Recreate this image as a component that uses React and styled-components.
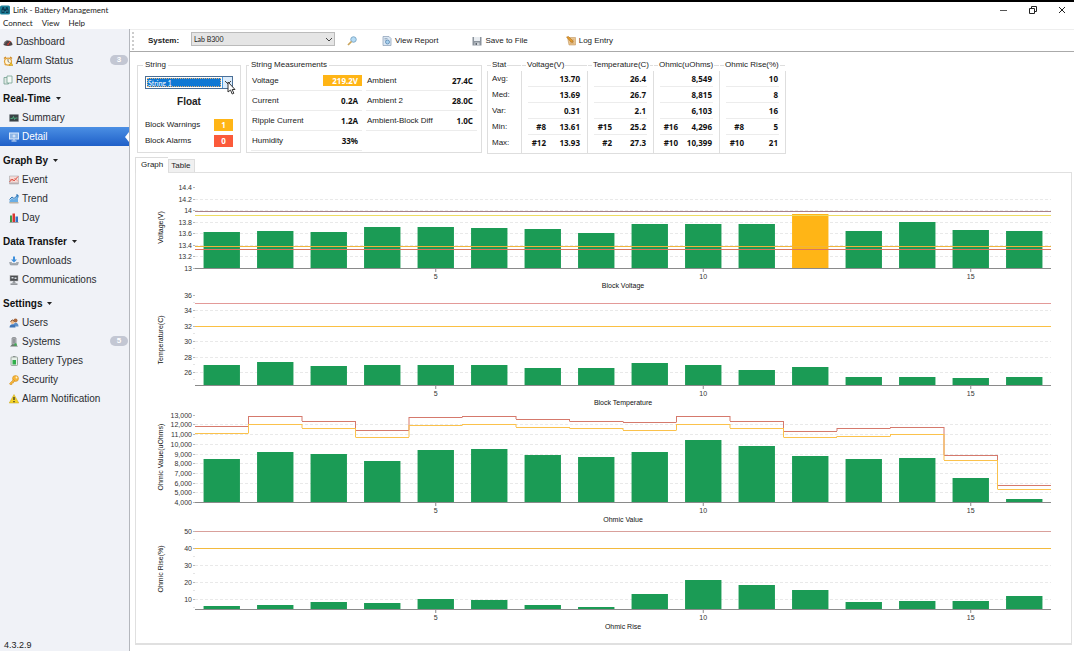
import { useState } from 'react'
import styled, { createGlobalStyle, css } from 'styled-components'

const GREEN = '#1b9b55'
const AMBER = '#ffb516'
const RED = '#fb5a3a'

const menus = ['Connect', 'View', 'Help']

const topLinks = [
    { name: 'Dashboard', icon: 'gauge' },
    { name: 'Alarm Status', icon: 'clock', count: 3 },
    { name: 'Reports', icon: 'reports' }
]

const sections = [
    { title: 'Real-Time', links: [
        { name: 'Summary', icon: 'monitor' },
        { name: 'Detail', icon: 'screen', active: true }
    ] },
    { title: 'Graph By', links: [
        { name: 'Event', icon: 'event' },
        { name: 'Trend', icon: 'trend' },
        { name: 'Day', icon: 'day' }
    ] },
    { title: 'Data Transfer', links: [
        { name: 'Downloads', icon: 'download' },
        { name: 'Communications', icon: 'comm' }
    ] },
    { title: 'Settings', links: [
        { name: 'Users', icon: 'users' },
        { name: 'Systems', icon: 'systems', count: 5 },
        { name: 'Battery Types', icon: 'battery' },
        { name: 'Security', icon: 'key' },
        { name: 'Alarm Notification', icon: 'warning' }
    ] }
]

const measurements = [
    [
        { label: 'Voltage', value: '219.2V', warn: true },
        { label: 'Current', value: '0.2A' },
        { label: 'Ripple Current', value: '1.2A' },
        { label: 'Humidity', value: '33%' }
    ],
    [
        { label: 'Ambient', value: '27.4C' },
        { label: 'Ambient 2', value: '28.0C' },
        { label: 'Ambient-Block Diff', value: '1.0C' }
    ]
]

const statHeads = ['Voltage(V)', 'Temperature(C)', 'Ohmic(uOhms)', 'Ohmic Rise(%)']

const stats = [
    { label: 'Avg:', cells: [['', '13.70'], ['', '26.4'], ['', '8,549'], ['', '10']] },
    { label: 'Med:', cells: [['', '13.69'], ['', '26.7'], ['', '8,815'], ['', '8']] },
    { label: 'Var:', cells: [['', '0.31'], ['', '2.1'], ['', '6,103'], ['', '16']] },
    { label: 'Min:', cells: [['#8', '13.61'], ['#15', '25.2'], ['#16', '4,296'], ['#8', '5']] },
    { label: 'Max:', cells: [['#12', '13.93'], ['#2', '27.3'], ['#10', '10,399'], ['#10', '21']] }
]

const charts = [
    {
        title: 'Block Voltage',
        axis: 'Voltage(V)',
        height: 81,
        min: 13,
        max: 14.4,
        ticks: [14.4, 14.2, 14, 13.8, 13.6, 13.4, 13.2, 13],
        values: [13.62, 13.64, 13.62, 13.71, 13.71, 13.69, 13.68, 13.61, 13.76, 13.76, 13.76, 13.93, 13.64, 13.8, 13.65, 13.64],
        warnings: [11],
        limits: [
            { color: '#a98087', value: 13.98 },
            { color: '#eedb62', value: 13.91 },
            { color: '#f0b43c', value: 13.38 },
            { color: '#d8765f', value: 13.33 }
        ]
    },
    {
        title: 'Block Temperature',
        axis: 'Temperature(C)',
        height: 90,
        min: 24.35,
        max: 36,
        ticks: [36, 34, 32, 30, 28, 26],
        values: [27, 27.3, 26.8, 27, 27, 26.9, 26.5, 26.5, 27.2, 27, 26.3, 26.7, 25.35, 25.4, 25.2, 25.35],
        limits: [
            { color: '#e39a98', value: 35 },
            { color: '#fbc043', value: 32 }
        ]
    },
    {
        title: 'Ohmic Value',
        axis: 'Ohmic Value(uOhms)',
        height: 90,
        min: 4000,
        max: 13290,
        ticks: [13000, 12000, 11000, 10000, 9000, 8000, 7000, 6000, 5000, 4000],
        values: [8430, 9150, 8950, 8200, 9350, 9420, 8870, 8690, 9210, 10399, 9790, 8740, 8430, 8500, 6500, 4296],
        steps: [
            { color: '#d5796c', values: [11880, 12920, 12400, 11480, 12730, 12920, 12520, 12410, 12240, 12920, 12410, 11360, 11670, 11780, 8900, 5760] },
            { color: '#fbc24c', values: [11150, 12070, 11600, 10750, 11910, 12070, 11700, 11600, 11390, 12070, 11660, 10680, 10860, 10980, 8370, 5380] }
        ]
    },
    {
        title: 'Ohmic Rise',
        axis: 'Ohmic Rise(%)',
        height: 80,
        min: 4.3,
        max: 51,
        ticks: [50, 40, 30, 20, 10],
        values: [5.8, 6.7, 8.5, 7.6, 10.2, 9.6, 6.9, 5.4, 13.2, 21.3, 18.4, 15.2, 8.5, 8.8, 9.2, 12],
        limits: [
            { color: '#d9a09b', value: 50 },
            { color: '#f3ba3e', value: 40 }
        ]
    }
]

const icons = {
    app: <>
        <rect x="0" y="1" width="20" height="18" rx="3" fill="#1c7f99" />
        <path d="M3 9l2-5h3l1 4h2l1-4h3l2 5v7h-5v-4H9v4H3z" fill="#0a3c55" />
        <path d="M5 11h2v2H5zM13 11h2v2h-2z" fill="#7fe0ea" />
    </>,
    gauge: <>
        <path d="M1 16a9 9 0 0 1 18 0q-9 4-18 0z" fill="#4b4547" />
        <path d="M3 14a7 7 0 0 1 6-7" stroke="#837b7c" strokeWidth="2" fill="none" />
        <path d="M10 15l5-7" stroke="#e4473a" strokeWidth="2" />
        <circle cx="10" cy="15" r="2" fill="#c2352f" />
    </>,
    clock: <>
        <path d="M2 5l4-3M18 5l-4-3M4 18l2-3M16 18l-2-3" stroke="#d08b26" strokeWidth="3" />
        <circle cx="10" cy="11" r="7" fill="#fff6dd" stroke="#e2a23a" strokeWidth="2.5" />
        <path d="M10 6v5l3 2" stroke="#555" strokeWidth="1.5" fill="none" />
        <path d="M12 19l4-6 4 6z" fill="#f3c62c" stroke="#b8860b" />
    </>,
    reports: <>
        <path d="M2 5h9v13H2z" fill="#dfe8e4" stroke="#6d9c8c" strokeWidth="1.5" />
        <path d="M8 2h10v14H8z" fill="#f4faf7" stroke="#6d9c8c" strokeWidth="1.5" />
    </>,
    monitor: <>
        <rect x="1" y="3" width="18" height="14" rx="1" fill="#3b4347" stroke="#8c9297" strokeWidth="1.5" />
        <path d="M3 11h4l2-4 2 6 2-3h4" stroke="#52c98c" strokeWidth="1.5" fill="none" />
    </>,
    screen: <>
        <rect x="1" y="2" width="18" height="12" fill="#8fb6e6" stroke="#dceafb" strokeWidth="2" />
        <path d="M10 5v6M7 8h6" stroke="#fff" strokeWidth="1.5" />
        <path d="M10 14v3M5 18h10" stroke="#dceafb" strokeWidth="2" />
    </>,
    event: <>
        <path d="M1 2h18v16H1z" fill="#f5dcd9" stroke="#9b9a9d" />
        <path d="M1 14l5-6 4 4 8-9" stroke="#df5148" strokeWidth="2" fill="none" />
        <path d="M2 8l5 4 5-6 6 7" stroke="#e78b7c" strokeWidth="1.5" fill="none" />
        <path d="M1 15h18v3H1z" fill="#b9aeb1" />
    </>,
    trend: <>
        <path d="M1 13l5-5 4 3 8-8v15H1z" fill="#6aaee5" />
        <path d="M1 11l5-5 4 3 8-7M14 2h4v5" stroke="#2673b7" strokeWidth="2" fill="none" />
        <path d="M1 16h18v3H1z" fill="#b9b3a8" />
    </>,
    day: <>
        <path d="M1 18h18v1.500H1z" fill="#888" />
        <path d="M2 5h4v13H2z" fill="#3a9c49" />
        <path d="M7 1h5v17H7z" fill="#d9352f" />
        <path d="M13 7h5v11h-5z" fill="#3274c4" />
    </>,
    download: <>
        <path d="M8 1h4v6h4l-6 6-6-6h4z" fill="#3c8edb" />
        <path d="M1 13l2 5h14l2-5h-4l-2 2H7l-2-2z" fill="#a9b0b6" stroke="#7d858c" />
    </>,
    comm: <>
        <rect x="2" y="1" width="16" height="11" fill="#4a4c50" stroke="#aaa" />
        <path d="M5 4h4v3H5zM11 5h4v3h-4z" fill="#d8dde2" />
        <path d="M10 12v4M3 18h14" stroke="#777b80" strokeWidth="2.5" />
        <path d="M7 14h6v3H7z" fill="#989ca0" />
    </>,
    users: <>
        <circle cx="13" cy="5" r="4" fill="#a8673c" />
        <path d="M8 17c0-10 11-10 11 0z" fill="#5c8fc9" />
        <circle cx="7" cy="8" r="4" fill="#f0bc8d" />
        <path d="M3 7q4-6 8 0" stroke="#6c4226" strokeWidth="2" fill="none" />
        <path d="M1 19c0-9 12-9 12 0z" fill="#3f74b5" />
    </>,
    systems: <>
        <path d="M6 2q4-3 8 0v13H6z" fill="#b9bbbe" stroke="#7e8286" strokeWidth="1.500" />
        <path d="M10 3v10" stroke="#6b6f74" strokeWidth="2" />
        <path d="M2 19l4-4h8l4 4z" fill="#6c7a70" />
        <circle cx="13" cy="15" r="2.500" fill="#3eae54" />
    </>,
    battery: <>
        <path d="M8 0h5v3H8z" fill="#8b9193" />
        <rect x="4" y="2" width="13" height="17" rx="1.500" fill="#e6efe8" stroke="#85908a" strokeWidth="1.500" />
        <path d="M7 8h7v9H7z" fill="#2fae4a" />
    </>,
    key: <>
        <circle cx="13" cy="7" r="6" fill="#f6b53a" stroke="#cf8a1b" />
        <circle cx="15" cy="5" r="1.800" fill="#fff3d2" />
        <path d="M9 9l-8 8 1 2h4v-3h3v-3l3-1z" fill="#f6b53a" stroke="#cf8a1b" />
    </>,
    warning: <>
        <path d="M10 1l9.500 17H.500z" fill="#f5d327" stroke="#c6a414" />
        <path d="M10 6v6M10 14v2.500" stroke="#2b2b2b" strokeWidth="2.500" />
    </>,
    search: <>
        <circle cx="13" cy="7" r="5.500" fill="#b5dcf6" stroke="#7fa9c6" strokeWidth="2" />
        <path d="M9 11l-7 7" stroke="#c9a45c" strokeWidth="3.500" />
    </>,
    view: <>
        <path d="M2 1h12l4 4v14H2z" fill="#dbe7f3" stroke="#8da2b8" strokeWidth="1.500" />
        <path d="M5 5h6M5 8h4" stroke="#8da2b8" strokeWidth="1.500" />
        <circle cx="11" cy="12" r="4" fill="#a8d1f0" stroke="#5682ab" strokeWidth="1.500" />
    </>,
    save: <>
        <path d="M1 2h18v17H1z" fill="#8b939c" />
        <path d="M4 2h12v8H4z" fill="#e9edf1" />
        <path d="M5 13h10v6H5z" fill="#d0d5da" />
        <path d="M7 14h3v4H7z" fill="#5d656e" />
    </>,
    log: <>
        <path d="M3 3h16v15H6z" fill="#e9c48e" stroke="#b88a52" />
        <path d="M8 8h8M8 11h8M8 14h8" stroke="#b58a5a" />
        <path d="M1 2l4-1 9 9-1 3-3-1z" fill="#e39b2c" stroke="#a96b1b" />
    </>
}

const Icon = ({ name }) => (
    <IconSvg viewBox="0 0 20 20" aria-hidden="true">{icons[name]}</IconSvg>
)

const Arrow = () => (
    <ArrowSvg viewBox="0 0 8 5" aria-hidden="true">
        <path d="M1 1l3 3 3-3" fill="none" stroke="#444" />
    </ArrowSvg>
)

const Chart = ({ chart }) => {
    const { title, axis, height, min, max, ticks, values, warnings = [], limits = [], steps = [] } = chart
    const slot = 100 / values.length
    const y = value => Math.round((max - value) / (max - min) * height)
    const gap = y(ticks[1]) - y(ticks[0])

    return (
        <ChartRow>
            <AxisSvg height={height + 27}>
                <AxisText textAnchor="middle" transform={`translate(27 ${height / 2}) rotate(-90)`}>{axis}</AxisText>
                {ticks.map(tick => (
                    <g key={tick}>
                        <TickText x="56" y={y(tick) + 3} textAnchor="end">{tick.toLocaleString('en-US')}</TickText>
                        <line x1="57" x2="59" y1={y(tick) + 0.5} y2={y(tick) + 0.5} stroke="#b9b9b9" />
                        {gap > 12 && <line x1="57" x2="59" y1={y(tick) + gap / 2} y2={y(tick) + gap / 2} stroke="#e4e4e4" />}
                    </g>
                ))}
            </AxisSvg>
            <PlotSvg height={height + 27} role="img" aria-label={title}>
                {ticks.slice(1).map(tick => (
                    <line key={tick} x1="0" x2="100%" y1={y(tick) + 0.5} y2={y(tick) + 0.5} stroke="#e9e9e9" strokeDasharray="3 2" />
                ))}
                {values.map((value, index) => (
                    <rect
                        key={index}
                        x={`${(index + 0.16) * slot}%`}
                        y={y(value)}
                        width={`${slot * 0.68}%`}
                        height={height - y(value)}
                        fill={warnings.includes(index) ? AMBER : GREEN}
                    />
                ))}
                {limits.map(limit => (
                    <line key={limit.value} x1="0" x2="100%" y1={y(limit.value) + 0.5} y2={y(limit.value) + 0.5} stroke={limit.color} />
                ))}
                {steps.map(step => step.values.map((value, index) => (
                    <g key={step.color + index} stroke={step.color}>
                        <line x1={`${index * slot}%`} x2={`${(index + 1) * slot}%`} y1={y(value) + 0.5} y2={y(value) + 0.5} />
                        {index > 0 && (
                            <line x1={`${index * slot}%`} x2={`${index * slot}%`} y1={y(step.values[index - 1])} y2={y(value)} />
                        )}
                    </g>
                )))}
                <line x1="0" x2="100%" y1={height + 0.5} y2={height + 0.5} stroke="#8a8a8a" />
                {[5, 10, 15].map(block => (
                    <g key={block}>
                        <line x1={`${(block - 0.5) * slot}%`} x2={`${(block - 0.5) * slot}%`} y1={height} y2={height + 4} stroke="#8a8a8a" />
                        <TickText x={`${(block - 0.5) * slot}%`} y={height + 11} textAnchor="middle">{block}</TickText>
                    </g>
                ))}
                <AxisText x="50%" y={height + 20} textAnchor="middle">{title}</AxisText>
            </PlotSvg>
        </ChartRow>
    )
}

const NavItem = ({ link, nested }) => (
    <NavLink href={`#${link.name}`} $nested={nested} $active={link.active}>
        <Icon name={link.icon} />
        <span>{link.name}</span>
        {link.count && <Count>{link.count}</Count>}
        {link.active && <Notch viewBox="0 0 4 10"><path d="M4 0v10L0 5z" fill="#fff" /></Notch>}
    </NavLink>
)

const App = () => {
    const [tab, setTab] = useState('Graph')

    return (
        <>
        <GlobalStyle />
        <Window>
            <TitleBar>
                <Icon name="app" />
                <Title>Link - Battery Management</Title>
                <WindowButton aria-label="Minimize">
                    <svg width="8" height="8"><path d="M0 4.500h7" stroke="#555" /></svg>
                </WindowButton>
                <WindowButton aria-label="Restore">
                    <svg width="8" height="8" fill="none" stroke="#222"><path d="M.500 2.500h5v5h-5zM2.500 2V.500h5v5H6" /></svg>
                </WindowButton>
                <WindowButton aria-label="Close">
                    <svg width="8" height="8"><path d="M1 1l6 6M7 1l-6 6" stroke="#222" /></svg>
                </WindowButton>
            </TitleBar>
            <MenuBar>
                {menus.map(menu => <MenuButton key={menu}>{menu}</MenuButton>)}
            </MenuBar>

            <Body>
                <Sidebar>
                    {topLinks.map(link => <NavItem key={link.name} link={link} />)}
                    {sections.map((section, index) => (
                        <Section key={section.title} $first={index === 0}>
                            <SectionButton>
                                {section.title}
                                <svg width="5" height="3"><path d="M0 0h5L2.500 3z" fill="#222" /></svg>
                            </SectionButton>
                            {section.links.map(link => <NavItem key={link.name} link={link} nested />)}
                        </Section>
                    ))}
                    <Version>4.3.2.9</Version>
                </Sidebar>

                <Main>
                    <Toolbar>
                        <Grip />
                        <SystemLabel htmlFor="system">System:</SystemLabel>
                        <SystemBox>
                            <SystemSelect id="system"><option>Lab B300</option></SystemSelect>
                            <Arrow />
                        </SystemBox>
                        <ToolButton $before="12px" aria-label="Search"><Icon name="search" /></ToolButton>
                        <ToolButton $before="25px"><Icon name="view" />View Report</ToolButton>
                        <ToolButton $before="34px"><Icon name="save" />Save to File</ToolButton>
                        <ToolButton $before="38px"><Icon name="log" />Log Entry</ToolButton>
                    </Toolbar>

                    <Groups>
                        <Group $width="104px" $inset="7px">
                            <legend>String</legend>
                            <StringBox>
                                <StringSelect aria-label="String"><option>String 1</option></StringSelect>
                                <StringArrow><Arrow /></StringArrow>
                                <Cursor viewBox="0 0 9 14">
                                    <path d="M1 1v10l2.500-2 1.700 4 1.600-.700L5.200 8.500H8z" fill="#fff" stroke="#333" />
                                </Cursor>
                            </StringBox>
                            <State>Float</State>
                            <Tally>Block Warnings<TallyValue $color={AMBER}>1</TallyValue></Tally>
                            <Tally>Block Alarms<TallyValue $color={RED}>0</TallyValue></Tally>
                        </Group>

                        <Group $width="236px" $inset="4px">
                            <legend>String Measurements</legend>
                            <MeasureGrid>
                                {measurements.map((column, index) => (
                                    <div key={index}>
                                        {column.map(item => (
                                            <Measure key={item.label}>
                                                <span>{item.label}</span>
                                                <MeasureValue $warn={item.warn}>{item.value}</MeasureValue>
                                            </Measure>
                                        ))}
                                    </div>
                                ))}
                            </MeasureGrid>
                        </Group>

                        <StatTable>
                            <thead>
                                <tr>
                                    <StatHead $first><span>Stat</span></StatHead>
                                    {statHeads.map(head => <StatHead key={head}><span>{head}</span></StatHead>)}
                                </tr>
                            </thead>
                            <tbody>
                                {stats.map(row => (
                                    <tr key={row.label}>
                                        <StatLabel>{row.label}</StatLabel>
                                        {row.cells.map(([block, value], index) => (
                                            <StatCell key={index}>
                                                <StatLine>
                                                    <StatBlock>{block}</StatBlock>
                                                    <span>{value}</span>
                                                </StatLine>
                                            </StatCell>
                                        ))}
                                    </tr>
                                ))}
                            </tbody>
                        </StatTable>
                    </Groups>

                    <Tabs role="tablist">
                        {['Graph', 'Table'].map(name => (
                            <Tab key={name} role="tab" aria-selected={tab === name} $active={tab === name} onClick={() => setTab(name)}>
                                {name}
                            </Tab>
                        ))}
                    </Tabs>
                    <Panel>
                        {charts.map(chart => <Chart key={chart.title} chart={chart} />)}
                    </Panel>
                </Main>
            </Body>
        </Window>
        </>
    )
}

const GlobalStyle = createGlobalStyle`
   * {
      box-sizing: border-box;
   }
   body {
      margin: 0;
      background: #fff;
      color: #222;
      font: 8px/12px "Liberation Sans", Arial, sans-serif;
   }
   button, select {
      margin: 0;
      padding: 0;
      border: none;
      background: none;
      color: inherit;
      font: inherit;
   }
   svg {
      display: block;
   }
`

const Window = styled.div`
   display: flex;
   flex-direction: column;
   min-height: 100vh;
   border-top: 2px solid #000;
`

const TitleBar = styled.header`
   display: flex;
   align-items: center;
   height: 16px;
   padding-right: 7px;
   font-family: Lato, "Liberation Sans", sans-serif;
`

const Title = styled.h1`
   flex: 1;
   margin: 0 0 0 3px;
   font-size: 8px;
   font-weight: 400;
`

const WindowButton = styled.button`
   display: flex;
   justify-content: center;
   width: 10px;
   margin-left: 19px;
`

const MenuBar = styled.nav`
   display: flex;
   gap: 9px;
   height: 11px;
   padding-left: 3px;
   font-family: Lato, "Liberation Sans", sans-serif;
   line-height: 10px;
`

const MenuButton = styled.button`
   height: 10px;
`

const Body = styled.div`
   display: flex;
   flex: 1;
`

const IconSvg = styled.svg`
   flex: none;
   width: 10px;
   height: 10px;
`

const Sidebar = styled.nav`
   display: flex;
   flex: none;
   flex-direction: column;
   width: 130px;
   padding-top: 3px;
   border-right: 1px solid #b4b7bd;
   background: #f0f2f7;
   font-size: 10px;
`

const NavLink = styled.a`
   position: relative;
   display: flex;
   align-items: center;
   gap: 3px;
   height: 19px;
   padding-left: ${({ $nested }) => $nested ? '9px' : '3px'};
   color: #2a2c30;
   text-decoration: none;
   ${({ $active }) => $active && css`
      background: linear-gradient(#4b8fe4, #1f60c8);
      color: #fff;
   `}
`

const Notch = styled.svg`
   position: absolute;
   right: 0;
   width: 4px;
   height: 10px;
`

const Count = styled.span`
   width: 18px;
   margin: 0 1px 2px auto;
   border-radius: 5px;
   background: #c3c7d3;
   color: #fff;
   font-size: 8px;
   font-weight: 700;
   line-height: 10px;
   text-align: center;
`

const Section = styled.div`
   margin-top: ${({ $first }) => $first ? '0' : '5px'};
`

const SectionButton = styled.button`
   display: flex;
   align-items: center;
   gap: 5px;
   height: 19px;
   padding-left: 3px;
   color: #111;
   font-weight: 700;
`

const Version = styled.p`
   margin: auto 0 0 4px;
   font-size: 9px;
`

const Main = styled.main`
   display: flex;
   flex: 1;
   flex-direction: column;
   min-width: 0;
`

const Toolbar = styled.div`
   display: flex;
   align-items: center;
   height: 23px;
   border-top: 1px solid #eee;
   border-bottom: 1px solid #aaa;
`

const Grip = styled.span`
   height: 18px;
   margin: 0 14px 0 2px;
   border-left: 2px dotted #ccc;
`

const SystemLabel = styled.label`
   width: 43px;
   font-weight: 700;
`

const SystemBox = styled.div`
   position: relative;
   display: flex;
   align-items: center;
   width: 144px;
   margin-bottom: 3px;
`

const SystemSelect = styled.select`
   flex: 1;
   height: 14px;
   padding-left: 2px;
   border: 1px solid #bbb;
   appearance: none;
   background: #e5e5e5;
   font-family: Lato, "Liberation Sans", sans-serif;
   font-size: 7px;
`

const ArrowSvg = styled.svg`
   position: absolute;
   right: 2px;
   width: 8px;
   height: 5px;
   pointer-events: none;
`

const ToolButton = styled.button`
   display: flex;
   align-items: center;
   gap: 3px;
   margin-left: ${({ $before }) => $before};
`

const Groups = styled.div`
   display: flex;
   flex-wrap: wrap;
   align-items: flex-start;
   gap: 5px;
   padding: 7px 7px 3px;
`

const Group = styled.fieldset`
   width: ${({ $width }) => $width};
   height: 94px;
   min-width: 0;
   margin: 0;
   padding: 0 ${({ $inset }) => $inset};
   border: 1px solid #dedede;

   legend {
      margin-left: -2px;
      padding: 0 2px;
   }
`

const StringBox = styled.div`
   position: relative;
   display: flex;
   height: 13px;
   margin-top: 5px;
   border: 1px solid #4b6f96;
`

const StringSelect = styled.select`
   flex: 1;
   margin: 1px;
   border: 1px dotted #e8b070;
   appearance: none;
   background: #0f78d4;
   color: #fff;
   font-family: Lato, "Liberation Sans", sans-serif;
   font-size: 7px;
   line-height: 8px;
`

const StringArrow = styled.span`
   position: relative;
   display: flex;
   align-items: center;
   width: 10px;
   border-left: 1px solid #4a9be0;
   background: #dcecfb;

   svg {
      right: 0;
   }
`

const Cursor = styled.svg`
   position: absolute;
   top: 4px;
   left: 81px;
   width: 9px;
   height: 14px;
`

const State = styled.p`
   margin: 6px 0 8px;
   font-size: 10px;
   font-weight: 700;
   line-height: 14px;
   text-align: center;
`

const Tally = styled.div`
   display: flex;
   align-items: center;
   justify-content: space-between;
   height: 16px;
`

const TallyValue = styled.b`
   width: 19px;
   background: ${({ $color }) => $color};
   color: #fff;
   font-family: "Noto Sans", sans-serif;
   text-align: center;
`

const MeasureGrid = styled.div`
   display: grid;
   grid-template-columns: 1fr 1fr;
   gap: 4px;
`

const Measure = styled.div`
   display: flex;
   align-items: center;
   justify-content: space-between;
   height: 20px;
   padding-left: 1px;
   border-bottom: 1px solid #ececec;
`

const MeasureValue = styled.b`
   padding: 0 4px;
   font-family: "Noto Sans", sans-serif;
   line-height: 11px;
   color: #111;
   ${({ $warn }) => $warn && css`
      padding-left: 9px;
      background: ${AMBER};
      color: #fff;
   `}
`

const StatTable = styled.table`
   border-collapse: separate;
   border-spacing: 0;

   th, td {
      padding: 0;
      border-right: 1px solid #dedede;
   }
   thead th {
      border-color: transparent;
   }
   tbody th {
      border-left: 1px solid #dedede;
   }
   tbody tr:last-child > * {
      height: 18px;
      padding-bottom: 2px;
      border-bottom: 1px solid #dedede;
   }
`

const StatHead = styled.th`
   width: ${({ $first }) => $first ? '35px' : '66px'};
   height: 12px;
   background: linear-gradient(#dedede, #dedede) 0 6px / 100% 1px no-repeat;
   font-weight: 400;
   text-align: left;

   span {
      margin-left: 4px;
      padding: 0 1px;
      background: #fff;
   }
`

const StatLabel = styled.th`
   font-weight: 400;
   text-align: left;
   text-indent: 4px;
`

const StatCell = styled.td`
   height: 16px;
`

const StatLine = styled.div`
   display: flex;
   justify-content: space-between;
   height: 16px;
   margin: 0 6px;
   padding-right: 1px;
   border-bottom: 1px solid #ececec;
   color: #111;
   font-family: "Noto Sans", sans-serif;
   font-weight: 700;
   line-height: 15px;

   tr:last-child & {
      border-color: transparent;
   }
`

const StatBlock = styled.span`
   width: 18px;
   text-align: right;
`

const Tabs = styled.div`
   display: flex;
   align-items: flex-end;
   height: 15px;
   margin-left: 5px;
`

const Tab = styled.button`
   height: 13px;
   padding: 0 4px 0 2px;
   border: 1px solid #ddd;
   border-bottom: none;
   background: #f0f0f0;
   ${({ $active }) => $active && css`
      z-index: 1;
      height: 16px;
      margin-bottom: -1px;
      padding: 0 5px 2px;
      border-right: none;
      background: #fff;
   `}
`

const Panel = styled.section`
   margin: 0 2px 6px 5px;
   padding: 14px 20px 7px 0;
   border: 1px solid #e0e0e0;
   border-bottom-width: 2px;
`

const ChartRow = styled.div`
   display: flex;
`

const AxisSvg = styled.svg`
   flex: none;
   width: 59px;
   overflow: visible;
`

const PlotSvg = styled.svg`
   flex: 1;
   min-width: 0;
   overflow: visible;
`

const TickText = styled.text`
   fill: #333;
   font-size: 7px;
`

const AxisText = styled.text`
   fill: #111;
   font-size: 7px;
`

export default App
